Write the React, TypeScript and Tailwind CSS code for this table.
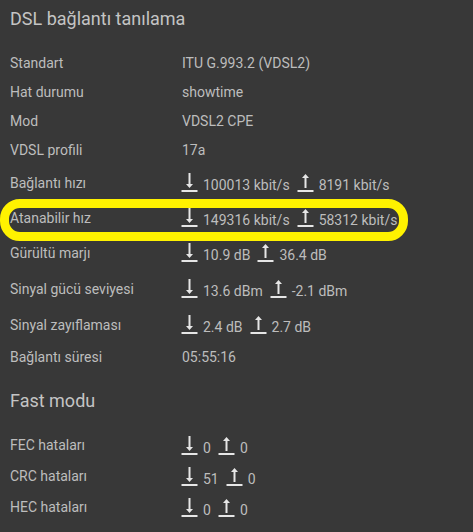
import React from "react";

const Down = () => (
  <svg width="18" height="20" viewBox="0 0 18 20" className="shrink-0">
    <rect x="7.5" y="0" width="2" height="12" fill="#e6e6e6" />
    <path d="M5 11 L12 11 L8.5 15 Z" fill="#e6e6e6" />
    <rect x="0.5" y="17" width="16" height="2" fill="#e6e6e6" />
  </svg>
);

const Up = () => (
  <svg width="18" height="20" viewBox="0 0 18 20" className="shrink-0">
    <path d="M5 5 L12 5 L8.5 1 Z" fill="#e6e6e6" />
    <rect x="7.5" y="4" width="2" height="11" fill="#e6e6e6" />
    <rect x="0.5" y="17" width="16" height="2" fill="#e6e6e6" />
  </svg>
);

const TextRow = ({ label, value, h = "h-[29px]" }: { label: string; value: string; h?: string }) => (
  <div className={`flex items-center ${h}`}>
    <div className="w-[172px] shrink-0">{label}</div>
    <div>{value}</div>
  </div>
);

const IconRow = ({
  label,
  down,
  up,
  h,
  highlight,
}: {
  label: string;
  down: string;
  up: string;
  h: string;
  highlight?: boolean;
}) => (
  <div className={`relative flex items-center ${h}`}>
    <div className="w-[171px] shrink-0">{label}</div>
    <div className="flex items-end gap-[4px]">
      <Down />
      <span className="mr-[3px] leading-[16px]">{down}</span>
      <Up />
      <span className="leading-[16px]">{up}</span>
    </div>
    {highlight && (
      <div className="pointer-events-none absolute left-[-10px] top-[-2px] w-[408px] h-[42px] rounded-[20px] border-[9px] border-[#fff200]" />
    )}
  </div>
);

export default function App() {
  return (
    <div
      className="min-h-[532px] w-[473px] bg-[#383838] text-[#bdbdbd] text-[14px] px-[10px]"
      style={{ fontFamily: "Roboto, 'Noto Sans', sans-serif" }}
    >
      <div className="h-[36px] flex items-center pt-[1px] text-[18px] text-[#c4c4c4]">DSL bağlantı tanılama</div>
      <div className="h-[13px]" />
      <TextRow label="Standart" value="ITU G.993.2 (VDSL2)" />
      <TextRow label="Hat durumu" value="showtime" />
      <TextRow label="Mod" value="VDSL2 CPE" />
      <TextRow label="VDSL profili" value="17a" />
      <IconRow label="Bağlantı hızı" down="100013 kbit/s" up="8191 kbit/s" h="h-[36px]" />
      <IconRow label="Atanabilir hız" down="149316 kbit/s" up="58312 kbit/s" h="h-[34px]" highlight />
      <IconRow label="Gürültü marjı" down="10.9 dB" up="36.4 dB" h="h-[36px]" />
      <IconRow label="Sinyal gücü seviyesi" down="13.6 dBm" up="-2.1 dBm" h="h-[36px]" />
      <IconRow label="Sinyal zayıflaması" down="2.4 dB" up="2.7 dB" h="h-[36px]" />
      <TextRow label="Bağlantı süresi" value="05:55:16" />
      <div className="h-[58px] flex items-center pb-[2px] text-[18px] text-[#c4c4c4]">Fast modu</div>
      <IconRow label="FEC hataları" down="0" up="0" h="h-[31px]" />
      <IconRow label="CRC hataları" down="51" up="0" h="h-[31px]" />
      <IconRow label="HEC hataları" down="0" up="0" h="h-[31px]" />
    </div>
  );
}
